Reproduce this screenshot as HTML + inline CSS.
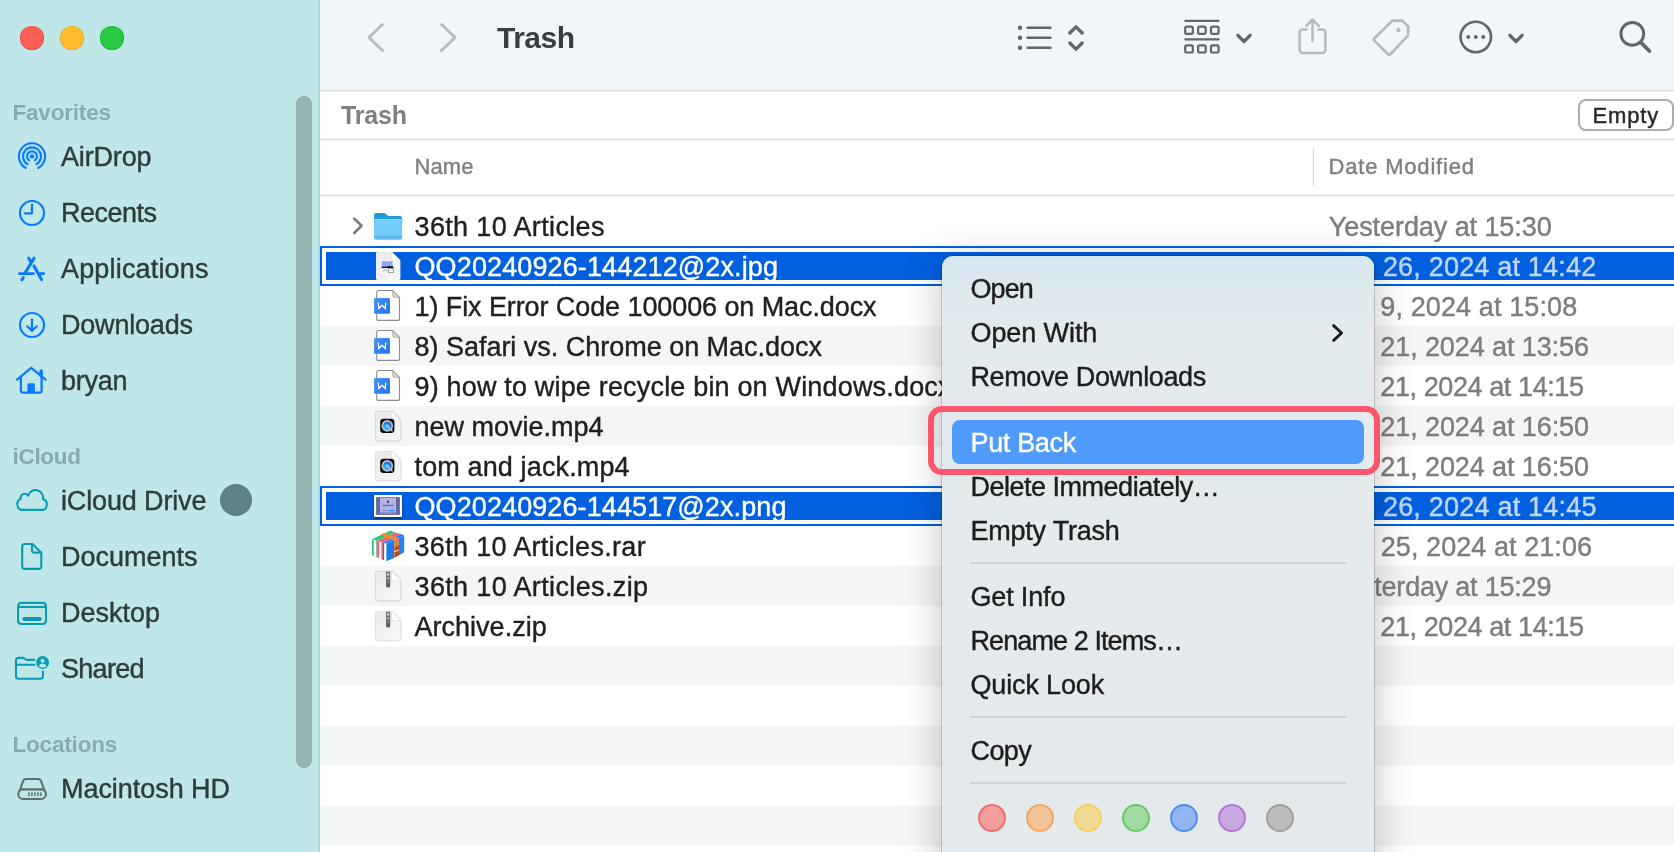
<!DOCTYPE html>
<html><head><meta charset="utf-8"><title>Trash</title>
<style>
html,body{margin:0;padding:0;}
body{width:1674px;height:852px;overflow:hidden;position:relative;background:#fff;font-family:"Liberation Sans",sans-serif;}
.t{position:absolute;white-space:nowrap;height:40px;line-height:40px;}
#root{position:absolute;left:0;top:0;width:1674px;height:852px;overflow:hidden;will-change:transform;}
.abs{position:absolute;}
svg{position:absolute;overflow:visible;}
</style></head><body><div id="root">

<div class="abs" style="left:320px;top:0;width:1354px;height:90px;background:#f1f6fa;"></div>
<div class="abs" style="left:320px;top:90px;width:1354px;height:1px;background:#d9dada;"></div>
<div class="abs" style="left:320px;top:91px;width:1354px;height:1px;background:#eeefef;"></div>
<div class="abs" style="left:320px;top:138px;width:1354px;height:3px;background:linear-gradient(#f4f4f4 0,#f4f4f4 1px,#dedede 1px,#dedede 2px,#f0f0f0 2px);"></div>
<div class="abs" style="left:320px;top:194px;width:1354px;height:3px;background:linear-gradient(#f4f4f4 0,#f4f4f4 1px,#dedede 1px,#dedede 2px,#f0f0f0 2px);"></div>
<div class="abs" style="left:320px;top:246px;width:1354px;height:40px;background:#f4f5f5;"></div>
<div class="abs" style="left:320px;top:326px;width:1354px;height:40px;background:#f4f5f5;"></div>
<div class="abs" style="left:320px;top:406px;width:1354px;height:40px;background:#f4f5f5;"></div>
<div class="abs" style="left:320px;top:486px;width:1354px;height:40px;background:#f4f5f5;"></div>
<div class="abs" style="left:320px;top:566px;width:1354px;height:40px;background:#f4f5f5;"></div>
<div class="abs" style="left:320px;top:646px;width:1354px;height:40px;background:#f4f5f5;"></div>
<div class="abs" style="left:320px;top:726px;width:1354px;height:40px;background:#f4f5f5;"></div>
<div class="abs" style="left:320px;top:806px;width:1354px;height:40px;background:#f4f5f5;"></div>
<div class="abs" style="left:0;top:0;width:320px;height:852px;background:#bfe7e8;"></div>
<div class="abs" style="left:318px;top:0;width:1px;height:852px;background:#b5dfe0;"></div>
<div class="abs" style="left:319px;top:0;width:1px;height:852px;background:#a8d2d3;"></div>
<div class="abs" style="left:296px;top:96px;width:16px;height:672px;border-radius:8px;background:#96b3b3;"></div>
<div class="abs" style="left:20px;top:26px;width:24px;height:24px;border-radius:50%;background:#fe5f57;box-shadow:inset 0 0 0 0.6px #e2473f;"></div>
<div class="abs" style="left:60px;top:26px;width:24px;height:24px;border-radius:50%;background:#febc2e;box-shadow:inset 0 0 0 0.6px #dfa023;"></div>
<div class="abs" style="left:100px;top:26px;width:24px;height:24px;border-radius:50%;background:#28c840;box-shadow:inset 0 0 0 0.6px #1fab33;"></div>
<div class="t" style="left:12.5px;top:93px;font-size:22.5px;color:#86acac;font-weight:bold;letter-spacing:-0.193px;">Favorites</div>
<div class="t" style="left:12.5px;top:437px;font-size:22.5px;color:#86acac;font-weight:bold;letter-spacing:-0.297px;">iCloud</div>
<div class="t" style="left:12.5px;top:725px;font-size:22.5px;color:#86acac;font-weight:bold;letter-spacing:-0.183px;">Locations</div>
<div class="t" style="left:61px;top:137px;font-size:27px;color:#2f3b3b;-webkit-text-stroke:0.4px #2f3b3b;letter-spacing:-0.170px;">AirDrop</div>
<div class="t" style="left:61px;top:193px;font-size:27px;color:#2f3b3b;-webkit-text-stroke:0.4px #2f3b3b;letter-spacing:-0.508px;">Recents</div>
<div class="t" style="left:61px;top:249px;font-size:27px;color:#2f3b3b;-webkit-text-stroke:0.4px #2f3b3b;letter-spacing:0.174px;">Applications</div>
<div class="t" style="left:61px;top:305px;font-size:27px;color:#2f3b3b;-webkit-text-stroke:0.4px #2f3b3b;letter-spacing:-0.197px;">Downloads</div>
<div class="t" style="left:61px;top:361px;font-size:27px;color:#2f3b3b;-webkit-text-stroke:0.4px #2f3b3b;letter-spacing:-0.260px;">bryan</div>
<div class="t" style="left:61px;top:481px;font-size:27px;color:#2f3b3b;-webkit-text-stroke:0.4px #2f3b3b;letter-spacing:-0.141px;">iCloud Drive</div>
<div class="t" style="left:61px;top:537px;font-size:27px;color:#2f3b3b;-webkit-text-stroke:0.4px #2f3b3b;letter-spacing:-0.007px;">Documents</div>
<div class="t" style="left:61px;top:593px;font-size:27px;color:#2f3b3b;-webkit-text-stroke:0.4px #2f3b3b;letter-spacing:-0.008px;">Desktop</div>
<div class="t" style="left:61px;top:649px;font-size:27px;color:#2f3b3b;-webkit-text-stroke:0.4px #2f3b3b;letter-spacing:-0.713px;">Shared</div>
<div class="t" style="left:61px;top:769px;font-size:27px;color:#2f3b3b;-webkit-text-stroke:0.4px #2f3b3b;letter-spacing:-0.050px;">Macintosh HD</div>
<div class="abs" style="left:220px;top:484px;width:32px;height:32px;border-radius:50%;background:#5b8182;"></div>
<svg style="left:8px;top:130px;" width="50" height="50" viewBox="0 0 50 50"><g fill="none" stroke="#0a7aff" stroke-width="2.1" stroke-linecap="round"><path d="M17.85 37.97 A13.1 13.1 0 1 1 30.15 37.97"/><path d="M19.50 34.19 A9 9 0 1 1 28.50 34.19"/><path d="M21.06 30.45 A5 5 0 1 1 26.94 30.45"/></g><circle cx="24" cy="26.4" r="2.2" fill="#0a7aff"/></svg>
<svg style="left:8px;top:186px;" width="50" height="50" viewBox="0 0 50 50"><g fill="none" stroke="#0a7aff" stroke-width="2.2" stroke-linecap="round" stroke-linejoin="round"><circle cx="24" cy="27" r="12"/><path d="M24 18.6 V27.3 H16.8"/></g></svg>
<svg style="left:8px;top:242px;" width="50" height="50" viewBox="0 0 50 50"><g fill="none" stroke="#0a7aff" stroke-width="2.7" stroke-linecap="round"><path d="M11.3 31.6 H25.6 M32 31.6 H35.8"/><path d="M26 16.2 L17.2 30.8 M15.3 35.6 L13.8 37.8" stroke-width="3.1"/><path d="M20.6 16.2 L23.2 20 M25.9 23.8 L33.5 37.6" stroke-width="3.1"/></g></svg>
<svg style="left:8px;top:298px;" width="50" height="50" viewBox="0 0 50 50"><g fill="none" stroke="#0a7aff" stroke-width="2.2" stroke-linecap="round" stroke-linejoin="round"><circle cx="24" cy="27" r="12"/><path d="M24 21.3 V32.8 M19.3 28.3 L24 32.9 L28.7 28.3"/></g></svg>
<svg style="left:8px;top:354px;" width="50" height="50" viewBox="0 0 50 50"><g fill="none" stroke="#0a7aff" stroke-width="2.3" stroke-linecap="round" stroke-linejoin="round"><path d="M9 25.6 L23.2 13.8 L37.6 25.6"/><path d="M12.9 23.4 V36.6 a2 2 0 0 0 2 2 H31.6 a2 2 0 0 0 2 -2 V23.4"/></g><path d="M33.1 17 V21.5" stroke="#0a7aff" stroke-width="3.6" stroke-linecap="round" fill="none"/><path d="M19.4 39 V30.6 a1.4 1.4 0 0 1 1.4 -1.4 H25.5 a1.4 1.4 0 0 1 1.4 1.4 V39 Z" fill="#0a7aff"/></svg>
<svg style="left:8px;top:476px;" width="50" height="50" viewBox="0 0 50 50"><path d="M13.2 33.9 A6.07 6.07 0 0 1 12.8 22.7 A4.1 4.1 0 0 1 20.2 19.6 A7.55 7.55 0 0 1 34.9 23 A5.8 5.8 0 0 1 35.2 33.9 Z" fill="none" stroke="#079cb4" stroke-width="2.1" stroke-linejoin="round"/></svg>
<svg style="left:8px;top:532px;" width="50" height="50" viewBox="0 0 50 50"><g fill="none" stroke="#079cb4" stroke-width="2.1" stroke-linejoin="round" stroke-linecap="round"><path d="M16.8 12 H24.6 L33.3 20.7 V34.3 a2.6 2.6 0 0 1 -2.6 2.6 H16.8 a2.6 2.6 0 0 1 -2.6 -2.6 V14.6 a2.6 2.6 0 0 1 2.6 -2.6 Z"/><path d="M24 12.2 V18.6 a2 2 0 0 0 2 2 H33"/></g></svg>
<svg style="left:8px;top:588px;" width="50" height="50" viewBox="0 0 50 50"><g fill="none" stroke="#079cb4" stroke-width="2.1"><rect x="10.1" y="14.9" width="27.9" height="21.1" rx="3.2"/><path d="M10.1 19 H38"/></g><rect x="14.4" y="28.9" width="19.4" height="4.1" rx="2" fill="#079cb4"/></svg>
<svg style="left:8px;top:644px;" width="50" height="50" viewBox="0 0 50 50"><g fill="none" stroke="#079cb4" stroke-width="2.1" stroke-linejoin="round" stroke-linecap="round"><path d="M26.4 15.9 H19 C17.4 15.9 16.6 13.9 14.6 13.9 H10.4 a2.4 2.4 0 0 0 -2.4 2.4 V32.3 a2.4 2.4 0 0 0 2.4 2.4 H32.5 a2.4 2.4 0 0 0 2.4 -2.4 V27.5"/><path d="M8 20.8 H26.4"/></g><circle cx="34.6" cy="18.5" r="6.5" fill="#079cb4"/><circle cx="34.6" cy="16.7" r="2" fill="#bfe7e8"/><path d="M30.8 22 C31.4 20.3 33 19.8 34.6 19.8 C36.2 19.8 37.8 20.3 38.4 22 C37.4 23 36.1 23.5 34.6 23.5 C33.1 23.5 31.8 23 30.8 22 Z" fill="#bfe7e8"/></svg>
<svg style="left:8px;top:764px;" width="50" height="50" viewBox="0 0 50 50"><g fill="none" stroke="#5f6f6f" stroke-width="2.1" stroke-linejoin="round"><rect x="10.3" y="25.4" width="27.6" height="9.6" rx="4.8"/><path d="M11.6 27 L15 17.3 C15.5 15.9 16.5 15 18 15 H30.2 C31.7 15 32.7 15.9 33.2 17.3 L36.6 27"/></g><rect x="20.2" y="28.4" width="1.5" height="3.6" fill="#5f6f6f"/><rect x="23.2" y="28.4" width="1.5" height="3.6" fill="#5f6f6f"/><rect x="26.2" y="28.4" width="1.5" height="3.6" fill="#5f6f6f"/><rect x="29.2" y="28.4" width="1.5" height="3.6" fill="#5f6f6f"/><rect x="32.2" y="28.4" width="1.5" height="3.6" fill="#5f6f6f"/></svg>
<svg style="left:0px;top:0px;" width="1674" height="90" viewBox="0 0 1674 90"><g fill="none" stroke="#b9bbbb" stroke-width="3" stroke-linecap="round" stroke-linejoin="round"><path d="M382.5 24.5 L369 37.5 L382.5 50.5"/><path d="M441.5 24.5 L455 37.5 L441.5 50.5"/></g></svg>
<div class="t" style="left:497px;top:18px;font-size:30px;color:#3a3d3d;font-weight:bold;letter-spacing:-0.511px;">Trash</div>
<svg style="left:0px;top:0px;" width="1674" height="90" viewBox="0 0 1674 90"><g fill="none" stroke="#5f6767" stroke-width="2.6" stroke-linecap="round"><path d="M1027.6 27.8 H1050.4"/><path d="M1027.6 37.8 H1050.4"/><path d="M1027.6 47.8 H1050.4"/></g><circle cx="1020" cy="27.8" r="2.2" fill="#5f6767"/><circle cx="1020" cy="37.8" r="2.2" fill="#5f6767"/><circle cx="1020" cy="47.8" r="2.2" fill="#5f6767"/><g fill="none" stroke="#5f6767" stroke-width="3.3" stroke-linecap="round" stroke-linejoin="round"><path d="M1069.8 33 L1076 26.8 L1082.2 33"/><path d="M1069.8 43 L1076 49.2 L1082.2 43"/></g><g fill="none" stroke="#5f6767" stroke-width="2.2" stroke-linecap="round" stroke-linejoin="round"><path d="M1185.3 20.8 H1218.6 M1185.3 39.4 H1218.6"/><rect x="1185.2" y="26.6" width="7.6" height="7.2" rx="1.6"/><rect x="1198.1" y="26.6" width="7.6" height="7.2" rx="1.6"/><rect x="1211" y="26.6" width="7.6" height="7.2" rx="1.6"/><rect x="1185.2" y="45.3" width="7.6" height="7.2" rx="1.6"/><rect x="1198.1" y="45.3" width="7.6" height="7.2" rx="1.6"/><rect x="1211" y="45.3" width="7.6" height="7.2" rx="1.6"/></g><g fill="none" stroke="#5f6767" stroke-width="3.3" stroke-linecap="round" stroke-linejoin="round"><path d="M1237.8 35.3 L1244 41.5 L1250.2 35.3"/><path d="M1509.8 35.3 L1516 41.5 L1522.2 35.3"/></g><g fill="none" stroke="#b7baba" stroke-width="2.5" stroke-linecap="round" stroke-linejoin="round"><path d="M1306.5 29.5 H1302.6 a3 3 0 0 0 -3 3 V50 a3 3 0 0 0 3 3 H1322.4 a3 3 0 0 0 3 -3 V32.5 a3 3 0 0 0 -3 -3 H1318.5"/><path d="M1312.5 41 V19.8 M1306.2 25.8 L1312.5 19.5 L1318.8 25.8"/></g><g fill="none" stroke="#b7baba" stroke-width="2.6" stroke-linejoin="round"><path d="M1392.5 20.6 H1402.3 L1408.2 26.5 V35.3 L1390.6 54 a2 2 0 0 1 -2.8 0 L1374.6 40.8 a2 2 0 0 1 0 -2.8 Z"/></g><circle cx="1398.4" cy="30.2" r="2.1" fill="#b7baba"/><circle cx="1475.8" cy="37" r="15.2" fill="none" stroke="#5f6767" stroke-width="2.6"/><circle cx="1468.3" cy="37" r="1.9" fill="#5f6767"/><circle cx="1475.8" cy="37" r="1.9" fill="#5f6767"/><circle cx="1483.3" cy="37" r="1.9" fill="#5f6767"/><g fill="none" stroke="#5f6767" stroke-width="3" stroke-linecap="round"><circle cx="1632.3" cy="33.8" r="11.4"/></g><path d="M1641 42.6 L1649.4 51" fill="none" stroke="#5f6767" stroke-width="3.8" stroke-linecap="round"/></svg>
<div class="t" style="left:341px;top:95px;font-size:25px;color:#7f7f7f;font-weight:bold;letter-spacing:-0.175px;">Trash</div>
<div class="abs" style="left:1577.5px;top:99px;width:96.5px;height:31.5px;box-sizing:border-box;border:2px solid #aaadad;border-radius:8px;background:#fff;"></div>
<div class="t" style="left:1592.4px;top:96px;font-size:22px;color:#262626;-webkit-text-stroke:0.4px #262626;letter-spacing:0.888px;">Empty</div>
<div class="t" style="left:414.5px;top:147px;font-size:22px;color:#7f7f7f;-webkit-text-stroke:0.4px #7f7f7f;letter-spacing:0.104px;">Name</div>
<div class="t" style="left:1328.5px;top:147px;font-size:22px;color:#7f7f7f;-webkit-text-stroke:0.4px #7f7f7f;letter-spacing:0.812px;">Date Modified</div>
<div class="abs" style="left:1312.5px;top:148px;width:1px;height:38px;background:#d6d6d6;"></div>
<div class="abs" style="left:320px;top:246px;width:1360px;height:40px;box-sizing:border-box;border:2px solid #0060df;background:#fff;"></div>
<div class="abs" style="left:326px;top:252px;width:1354px;height:28px;background:#0060df;"></div>
<div class="abs" style="left:320px;top:486px;width:1360px;height:40px;box-sizing:border-box;border:2px solid #0060df;background:#fff;"></div>
<div class="abs" style="left:326px;top:492px;width:1354px;height:28px;background:#0060df;"></div>
<svg style="left:340px;top:206px;" width="40" height="40" viewBox="0 0 40 40"><path d="M14.2 12.6 L21.6 19.8 L14.2 27" fill="none" stroke="#7c7c7c" stroke-width="2.6" stroke-linecap="round" stroke-linejoin="round"/></svg>
<svg style="left:373.8px;top:213px;" width="28.2" height="26.6" viewBox="0 0 28.2 26.6"><path d="M0 2.4 a2.4 2.4 0 0 1 2.4 -2.4 H9.6 C11 0 11.6 0.6 12.4 1.6 C13.2 2.6 13.8 3 15.2 3 H25.8 a2.4 2.4 0 0 1 2.4 2.4 V10 H0 Z" fill="#2199dc"/><rect x="0" y="6" width="28.2" height="20.4" rx="2" fill="#72ccfa"/><rect x="0" y="6" width="28.2" height="1" fill="#8fd8fc"/><path d="M0 22.6 H28.2 V24.4 a2 2 0 0 1 -2 2 H2 a2 2 0 0 1 -2 -2 Z" fill="#5db9ee"/></svg>
<svg style="left:376px;top:252px;" width="24" height="28" viewBox="0 0 24 28"><defs><linearGradient id="pg" x1="0" y1="0" x2="1" y2="1"><stop offset="0" stop-color="#e9e9e9"/><stop offset="1" stop-color="#f8f8f8"/></linearGradient></defs><path d="M1.4 0 H16 L24.4 8.4 V26.6 a1.4 1.4 0 0 1 -1.4 1.4 H1.4 a1.4 1.4 0 0 1 -1.4 -1.4 V1.4 a1.4 1.4 0 0 1 1.4 -1.4 Z" fill="url(#pg)"/><path d="M15.4 0.2 L24.3 9.1 H17 a1.6 1.6 0 0 1 -1.6 -1.6 Z" fill="#d9d9d9"/><path d="M16 0 L24.4 8.4 H17.4 a1.4 1.4 0 0 1 -1.4 -1.4 Z" fill="#ffffff"/><rect x="4.4" y="8.4" width="13.6" height="13.4" rx="1.6" fill="#fafafa"/><rect x="5.6" y="9.2" width="11" height="5.6" fill="#8ea9f2"/><rect x="5.6" y="14.6" width="11" height="1.6" fill="#0b1040"/><path d="M11.4 14.2 h5.4 l1.2 2 h-7.4 z" fill="#111"/><rect x="5.6" y="16.2" width="11" height="4.4" fill="#eef2f4"/><path d="M12.8 16.6 h4 l1 3.8 h-5.6 z" fill="#fff" stroke="#555" stroke-width="0.6"/><path d="M7 19.4 l2.4 -1.6 l2 1" stroke="#888" stroke-width="0.7" fill="none"/></svg>
<svg style="left:375px;top:290.2px;" width="26" height="32" viewBox="0 0 26 32"><defs><linearGradient id="wb" x1="0" y1="0" x2="1" y2="1"><stop offset="0" stop-color="#4d90f4"/><stop offset="1" stop-color="#1f74ef"/></linearGradient></defs><path d="M3.7 0.5 H17.6 L24.5 7.4 V28.4 a2 2 0 0 1 -2 2 H3.7 a2 2 0 0 1 -2 -2 V2.5 a2 2 0 0 1 2 -2 Z" fill="#fff" stroke="#8d8d8d" stroke-width="1.1"/><path d="M17.6 0.7 V5.6 a1.8 1.8 0 0 0 1.8 1.8 H24.3 Z" fill="#d6d6d6" stroke="#9a9a9a" stroke-width="0.6" stroke-linejoin="round"/><rect x="-0.9" y="7.9" width="15.9" height="15.9" rx="1.3" fill="url(#wb)"/><path d="M3.3 12.5 L3.85 18.5 L7.05 15.1 L10.25 18.5 L10.8 12.5" fill="none" stroke="#fff" stroke-width="1.25" stroke-linejoin="miter" stroke-linecap="butt"/></svg>
<svg style="left:375px;top:330.2px;" width="26" height="32" viewBox="0 0 26 32"><defs><linearGradient id="wb" x1="0" y1="0" x2="1" y2="1"><stop offset="0" stop-color="#4d90f4"/><stop offset="1" stop-color="#1f74ef"/></linearGradient></defs><path d="M3.7 0.5 H17.6 L24.5 7.4 V28.4 a2 2 0 0 1 -2 2 H3.7 a2 2 0 0 1 -2 -2 V2.5 a2 2 0 0 1 2 -2 Z" fill="#fff" stroke="#8d8d8d" stroke-width="1.1"/><path d="M17.6 0.7 V5.6 a1.8 1.8 0 0 0 1.8 1.8 H24.3 Z" fill="#d6d6d6" stroke="#9a9a9a" stroke-width="0.6" stroke-linejoin="round"/><rect x="-0.9" y="7.9" width="15.9" height="15.9" rx="1.3" fill="url(#wb)"/><path d="M3.3 12.5 L3.85 18.5 L7.05 15.1 L10.25 18.5 L10.8 12.5" fill="none" stroke="#fff" stroke-width="1.25" stroke-linejoin="miter" stroke-linecap="butt"/></svg>
<svg style="left:375px;top:370.2px;" width="26" height="32" viewBox="0 0 26 32"><defs><linearGradient id="wb" x1="0" y1="0" x2="1" y2="1"><stop offset="0" stop-color="#4d90f4"/><stop offset="1" stop-color="#1f74ef"/></linearGradient></defs><path d="M3.7 0.5 H17.6 L24.5 7.4 V28.4 a2 2 0 0 1 -2 2 H3.7 a2 2 0 0 1 -2 -2 V2.5 a2 2 0 0 1 2 -2 Z" fill="#fff" stroke="#8d8d8d" stroke-width="1.1"/><path d="M17.6 0.7 V5.6 a1.8 1.8 0 0 0 1.8 1.8 H24.3 Z" fill="#d6d6d6" stroke="#9a9a9a" stroke-width="0.6" stroke-linejoin="round"/><rect x="-0.9" y="7.9" width="15.9" height="15.9" rx="1.3" fill="url(#wb)"/><path d="M3.3 12.5 L3.85 18.5 L7.05 15.1 L10.25 18.5 L10.8 12.5" fill="none" stroke="#fff" stroke-width="1.25" stroke-linejoin="miter" stroke-linecap="butt"/></svg>
<svg style="left:376px;top:412.2px;filter:drop-shadow(0 0.8px 0.9px rgba(0,0,0,0.33));" width="24.4" height="28.4" viewBox="0 0 24.4 28.4"><defs><linearGradient id="pg" x1="0" y1="0" x2="1" y2="1"><stop offset="0" stop-color="#e9e9e9"/><stop offset="1" stop-color="#f8f8f8"/></linearGradient></defs><path d="M1.4 0 H16 L24.4 8.4 V27.0 a1.4 1.4 0 0 1 -1.4 1.4 H1.4 a1.4 1.4 0 0 1 -1.4 -1.4 V1.4 a1.4 1.4 0 0 1 1.4 -1.4 Z" fill="url(#pg)"/><path d="M15.4 0.2 L24.3 9.1 H17 a1.6 1.6 0 0 1 -1.6 -1.6 Z" fill="#d9d9d9"/><path d="M16 0 L24.4 8.4 H17.4 a1.4 1.4 0 0 1 -1.4 -1.4 Z" fill="#ffffff"/><defs><radialGradient id="qt" cx="0.3" cy="0.75" r="0.9"><stop offset="0" stop-color="#25ccff"/><stop offset="0.55" stop-color="#1b86fb"/><stop offset="1" stop-color="#1a4fe8"/></radialGradient></defs><rect x="4.2" y="6.8" width="14.2" height="14.2" rx="3.2" fill="#0b0b0b"/><circle cx="11.3" cy="13.9" r="5.8" fill="#bfc5cc"/><circle cx="11.3" cy="13.9" r="4.2" fill="url(#qt)"/><circle cx="11.2" cy="13.6" r="1.2" fill="#d7dbe0"/><path d="M11.4 13.8 L16 18.6" stroke="#b8bdc3" stroke-width="1.8" stroke-linecap="round"/></svg>
<svg style="left:376px;top:452.2px;filter:drop-shadow(0 0.8px 0.9px rgba(0,0,0,0.33));" width="24.4" height="28.4" viewBox="0 0 24.4 28.4"><defs><linearGradient id="pg" x1="0" y1="0" x2="1" y2="1"><stop offset="0" stop-color="#e9e9e9"/><stop offset="1" stop-color="#f8f8f8"/></linearGradient></defs><path d="M1.4 0 H16 L24.4 8.4 V27.0 a1.4 1.4 0 0 1 -1.4 1.4 H1.4 a1.4 1.4 0 0 1 -1.4 -1.4 V1.4 a1.4 1.4 0 0 1 1.4 -1.4 Z" fill="url(#pg)"/><path d="M15.4 0.2 L24.3 9.1 H17 a1.6 1.6 0 0 1 -1.6 -1.6 Z" fill="#d9d9d9"/><path d="M16 0 L24.4 8.4 H17.4 a1.4 1.4 0 0 1 -1.4 -1.4 Z" fill="#ffffff"/><defs><radialGradient id="qt" cx="0.3" cy="0.75" r="0.9"><stop offset="0" stop-color="#25ccff"/><stop offset="0.55" stop-color="#1b86fb"/><stop offset="1" stop-color="#1a4fe8"/></radialGradient></defs><rect x="4.2" y="6.8" width="14.2" height="14.2" rx="3.2" fill="#0b0b0b"/><circle cx="11.3" cy="13.9" r="5.8" fill="#bfc5cc"/><circle cx="11.3" cy="13.9" r="4.2" fill="url(#qt)"/><circle cx="11.2" cy="13.6" r="1.2" fill="#d7dbe0"/><path d="M11.4 13.8 L16 18.6" stroke="#b8bdc3" stroke-width="1.8" stroke-linecap="round"/></svg>
<div class="abs" style="left:374px;top:495px;width:28px;height:22px;box-shadow:0 1.5px 2px rgba(0,0,40,0.45);"></div>
<svg style="left:374px;top:495px;" width="28" height="22" viewBox="0 0 28 22"><rect x="0" y="0" width="28" height="22" fill="#fff"/><rect x="2.1" y="2.1" width="23.8" height="17.8" fill="#66669f"/><rect x="6" y="2.8" width="16" height="15.6" fill="#b5b4e9"/><rect x="6" y="17.2" width="16" height="1.6" fill="#8a89c4"/><rect x="13" y="5.6" width="2" height="2.2" rx="0.4" fill="#3b3f3b"/><rect x="8.4" y="9.8" width="11.4" height="1.3" fill="#6f6aa8"/><rect x="8.4" y="12.6" width="11.4" height="0.6" fill="#a19fd8"/><rect x="7.4" y="15" width="6" height="1.1" fill="#8f8dc6"/><rect x="14.2" y="14.9" width="6.8" height="1.5" rx="0.7" fill="#2a96ff"/></svg>
<svg style="left:365px;top:523px;" width="50" height="50" viewBox="0 0 852 852"><g><polygon points="120,275 430,128 512,160 215,308" fill="#25cc7a"/><polygon points="215,308 512,160 612,188 305,338" fill="#f4626c"/><polygon points="305,338 612,188 668,215 365,352" fill="#2a7ff0"/><polygon points="255,205 325,172 580,255 500,295" fill="#ef8a3c"/><polygon points="120,275 150,285 150,562 120,548" fill="#1cc370"/><polygon points="150,285 196,300 196,580 150,562" fill="#fdfdfd"/><polygon points="196,300 215,308 215,590 196,580" fill="#56605b"/><polygon points="215,308 245,318 245,602 215,590" fill="#f0626c"/><polygon points="245,318 280,330 280,616 245,602" fill="#fdfdfd"/><polygon points="280,330 305,338 305,626 280,616" fill="#ee5a64"/><polygon points="305,338 330,345 330,636 305,626" fill="#1f6fe6"/><polygon points="330,345 365,352 365,650 330,636" fill="#fdfdfd"/><polygon points="365,352 500,292 500,592 365,650" fill="#1c78ee"/><polygon points="500,292 578,256 578,548 500,592" fill="#e27d33"/><polygon points="505,420 578,380 578,548 505,590" fill="#c2440e"/><polygon points="500,478 578,452 578,470 500,500" fill="#f6e6d8"/><polygon points="578,256 668,215 668,500 578,548" fill="#2384f6"/></g></svg>
<svg style="left:376px;top:572.1px;filter:drop-shadow(0 0.8px 0.9px rgba(0,0,0,0.33));" width="24.4" height="28.2" viewBox="0 0 24.4 28.2"><defs><linearGradient id="pg" x1="0" y1="0" x2="1" y2="1"><stop offset="0" stop-color="#e9e9e9"/><stop offset="1" stop-color="#f8f8f8"/></linearGradient></defs><path d="M1.4 0 H16 L24.4 8.4 V26.8 a1.4 1.4 0 0 1 -1.4 1.4 H1.4 a1.4 1.4 0 0 1 -1.4 -1.4 V1.4 a1.4 1.4 0 0 1 1.4 -1.4 Z" fill="url(#pg)"/><path d="M15.4 0.2 L24.3 9.1 H17 a1.6 1.6 0 0 1 -1.6 -1.6 Z" fill="#d9d9d9"/><path d="M16 0 L24.4 8.4 H17.4 a1.4 1.4 0 0 1 -1.4 -1.4 Z" fill="#ffffff"/><path d="M10.1 -0.3 H14.2 V14 a1.6 1.6 0 0 1 -1.6 1.6 H11.7 a1.6 1.6 0 0 1 -1.6 -1.6 Z" fill="#5b6061"/><rect x="10.9" y="1" width="2.5" height="2.8" fill="#c3cacb"/><rect x="10.9" y="4.8" width="2.5" height="2.8" fill="#a9b1b2"/><rect x="11" y="9" width="2.3" height="1.8" fill="#7c8485"/></svg>
<svg style="left:376px;top:612.1px;filter:drop-shadow(0 0.8px 0.9px rgba(0,0,0,0.33));" width="24.4" height="28.2" viewBox="0 0 24.4 28.2"><defs><linearGradient id="pg" x1="0" y1="0" x2="1" y2="1"><stop offset="0" stop-color="#e9e9e9"/><stop offset="1" stop-color="#f8f8f8"/></linearGradient></defs><path d="M1.4 0 H16 L24.4 8.4 V26.8 a1.4 1.4 0 0 1 -1.4 1.4 H1.4 a1.4 1.4 0 0 1 -1.4 -1.4 V1.4 a1.4 1.4 0 0 1 1.4 -1.4 Z" fill="url(#pg)"/><path d="M15.4 0.2 L24.3 9.1 H17 a1.6 1.6 0 0 1 -1.6 -1.6 Z" fill="#d9d9d9"/><path d="M16 0 L24.4 8.4 H17.4 a1.4 1.4 0 0 1 -1.4 -1.4 Z" fill="#ffffff"/><path d="M10.1 -0.3 H14.2 V14 a1.6 1.6 0 0 1 -1.6 1.6 H11.7 a1.6 1.6 0 0 1 -1.6 -1.6 Z" fill="#5b6061"/><rect x="10.9" y="1" width="2.5" height="2.8" fill="#c3cacb"/><rect x="10.9" y="4.8" width="2.5" height="2.8" fill="#a9b1b2"/><rect x="11" y="9" width="2.3" height="1.8" fill="#7c8485"/></svg>
<div class="t" style="left:414.5px;top:207px;font-size:27px;color:#1f1f1f;-webkit-text-stroke:0.4px #1f1f1f;letter-spacing:0.359px;">36th 10 Articles</div>
<div class="t" style="left:1328.80px;top:207px;font-size:27px;color:#7d7d7d;-webkit-text-stroke:0.4px #7d7d7d;letter-spacing:-0.075px;">Yesterday at 15:30</div>
<div class="t" style="left:414.5px;top:247px;font-size:27px;color:#fff;-webkit-text-stroke:0.4px #fff;letter-spacing:0.123px;">QQ20240926-144212@2x.jpg</div>
<div class="t" style="left:1326.58px;top:247px;font-size:27px;color:#c3d7f6;-webkit-text-stroke:0.4px #c3d7f6;letter-spacing:0.195px;">Sep 26, 2024 at 14:42</div>
<div class="t" style="left:414.5px;top:287px;font-size:27px;color:#1f1f1f;-webkit-text-stroke:0.4px #1f1f1f;letter-spacing:-0.089px;">1) Fix Error Code 100006 on Mac.docx</div>
<div class="t" style="left:1330.33px;top:287px;font-size:27px;color:#7d7d7d;-webkit-text-stroke:0.4px #7d7d7d;letter-spacing:0.115px;">Oct 9, 2024 at 15:08</div>
<div class="t" style="left:414.5px;top:327px;font-size:27px;color:#1f1f1f;-webkit-text-stroke:0.4px #1f1f1f;letter-spacing:-0.021px;">8) Safari vs. Chrome on Mac.docx</div>
<div class="t" style="left:1331.19px;top:327px;font-size:27px;color:#7d7d7d;-webkit-text-stroke:0.4px #7d7d7d;letter-spacing:-0.099px;">Oct 21, 2024 at 13:56</div>
<div class="t" style="left:414.5px;top:367px;font-size:27px;color:#1f1f1f;-webkit-text-stroke:0.4px #1f1f1f;letter-spacing:0.177px;">9) how to wipe recycle bin on Windows.docx</div>
<div class="t" style="left:1332.42px;top:367px;font-size:27px;color:#7d7d7d;-webkit-text-stroke:0.4px #7d7d7d;letter-spacing:-0.405px;">Oct 21, 2024 at 14:15</div>
<div class="t" style="left:414.5px;top:407px;font-size:27px;color:#1f1f1f;-webkit-text-stroke:0.4px #1f1f1f;letter-spacing:0.002px;">new movie.mp4</div>
<div class="t" style="left:1331.17px;top:407px;font-size:27px;color:#7d7d7d;-webkit-text-stroke:0.4px #7d7d7d;letter-spacing:-0.093px;">Oct 21, 2024 at 16:50</div>
<div class="t" style="left:414.5px;top:447px;font-size:27px;color:#1f1f1f;-webkit-text-stroke:0.4px #1f1f1f;letter-spacing:0.133px;">tom and jack.mp4</div>
<div class="t" style="left:1331.17px;top:447px;font-size:27px;color:#7d7d7d;-webkit-text-stroke:0.4px #7d7d7d;letter-spacing:-0.093px;">Oct 21, 2024 at 16:50</div>
<div class="t" style="left:414.5px;top:487px;font-size:27px;color:#fff;-webkit-text-stroke:0.4px #fff;letter-spacing:0.096px;">QQ20240926-144517@2x.png</div>
<div class="t" style="left:1326.50px;top:487px;font-size:27px;color:#c3d7f6;-webkit-text-stroke:0.4px #c3d7f6;letter-spacing:0.214px;">Sep 26, 2024 at 14:45</div>
<div class="t" style="left:414.5px;top:527px;font-size:27px;color:#1f1f1f;-webkit-text-stroke:0.4px #1f1f1f;letter-spacing:0.320px;">36th 10 Articles.rar</div>
<div class="t" style="left:1331.04px;top:527px;font-size:27px;color:#7d7d7d;-webkit-text-stroke:0.4px #7d7d7d;letter-spacing:0.064px;">Oct 25, 2024 at 21:06</div>
<div class="t" style="left:414.5px;top:567px;font-size:27px;color:#1f1f1f;-webkit-text-stroke:0.4px #1f1f1f;letter-spacing:0.362px;">36th 10 Articles.zip</div>
<div class="t" style="left:1330.90px;top:567px;font-size:27px;color:#7d7d7d;-webkit-text-stroke:0.4px #7d7d7d;letter-spacing:-0.216px;">Yesterday at 15:29</div>
<div class="t" style="left:414.5px;top:607px;font-size:27px;color:#1f1f1f;-webkit-text-stroke:0.4px #1f1f1f;letter-spacing:0.015px;">Archive.zip</div>
<div class="t" style="left:1332.42px;top:607px;font-size:27px;color:#7d7d7d;-webkit-text-stroke:0.4px #7d7d7d;letter-spacing:-0.405px;">Oct 21, 2024 at 14:15</div>
<div class="abs" style="left:942px;top:256px;width:432px;height:640px;border-radius:11px;background:linear-gradient(#d7e6ee 0px,#dfe9ee 40px,#e4ebee 90px,#e4eaec 100%);box-shadow:0 0 0 1px rgba(0,0,0,0.17),0 6px 38px rgba(0,0,0,0.25);"></div>
<div class="abs" style="left:952px;top:420px;width:412px;height:44px;border-radius:8px;background:#4f9afa;"></div>
<div class="t" style="left:970.5px;top:269px;font-size:27px;color:#1d1d1d;-webkit-text-stroke:0.4px #1d1d1d;letter-spacing:-0.916px;">Open</div>
<div class="t" style="left:970.5px;top:313px;font-size:27px;color:#1d1d1d;-webkit-text-stroke:0.4px #1d1d1d;letter-spacing:-0.094px;">Open With</div>
<div class="t" style="left:970.5px;top:357px;font-size:27px;color:#1d1d1d;-webkit-text-stroke:0.4px #1d1d1d;letter-spacing:-0.394px;">Remove Downloads</div>
<div class="t" style="left:970.5px;top:423px;font-size:27px;color:#fff;-webkit-text-stroke:0.4px #fff;letter-spacing:-0.336px;">Put Back</div>
<div class="t" style="left:970.5px;top:467px;font-size:27px;color:#1d1d1d;-webkit-text-stroke:0.4px #1d1d1d;letter-spacing:-0.494px;">Delete Immediately…</div>
<div class="t" style="left:970.5px;top:511px;font-size:27px;color:#1d1d1d;-webkit-text-stroke:0.4px #1d1d1d;letter-spacing:-0.225px;">Empty Trash</div>
<div class="t" style="left:970.5px;top:577px;font-size:27px;color:#1d1d1d;-webkit-text-stroke:0.4px #1d1d1d;letter-spacing:-0.165px;">Get Info</div>
<div class="t" style="left:970.5px;top:621px;font-size:27px;color:#1d1d1d;-webkit-text-stroke:0.4px #1d1d1d;letter-spacing:-0.906px;">Rename 2 Items…</div>
<div class="t" style="left:970.5px;top:665px;font-size:27px;color:#1d1d1d;-webkit-text-stroke:0.4px #1d1d1d;letter-spacing:-0.152px;">Quick Look</div>
<div class="t" style="left:970.5px;top:731px;font-size:27px;color:#1d1d1d;-webkit-text-stroke:0.4px #1d1d1d;letter-spacing:-0.610px;">Copy</div>
<div class="abs" style="left:970px;top:562px;width:376px;height:2px;background:#cdd3d5;"></div>
<div class="abs" style="left:970px;top:716px;width:376px;height:2px;background:#cdd3d5;"></div>
<div class="abs" style="left:970px;top:782px;width:376px;height:2px;background:#cdd3d5;"></div>
<svg style="left:1320px;top:313px;" width="40" height="40" viewBox="0 0 40 40"><path d="M13.6 12.6 L21.6 20 L13.6 27.4" fill="none" stroke="#1a1a1a" stroke-width="2.8" stroke-linecap="round" stroke-linejoin="round"/></svg>
<div class="abs" style="left:978px;top:803.6px;width:28px;height:28px;box-sizing:border-box;border-radius:50%;background:#f29e9d;border:2px solid #f06f6d;"></div>
<div class="abs" style="left:1026px;top:803.6px;width:28px;height:28px;box-sizing:border-box;border-radius:50%;background:#f2c298;border:2px solid #f2a862;"></div>
<div class="abs" style="left:1074px;top:803.6px;width:28px;height:28px;box-sizing:border-box;border-radius:50%;background:#f2da96;border:2px solid #f3cf62;"></div>
<div class="abs" style="left:1122px;top:803.6px;width:28px;height:28px;box-sizing:border-box;border-radius:50%;background:#a0daa1;border:2px solid #66c96a;"></div>
<div class="abs" style="left:1170px;top:803.6px;width:28px;height:28px;box-sizing:border-box;border-radius:50%;background:#90b5f3;border:2px solid #518ff0;"></div>
<div class="abs" style="left:1218px;top:803.6px;width:28px;height:28px;box-sizing:border-box;border-radius:50%;background:#c9a7df;border:2px solid #b676d8;"></div>
<div class="abs" style="left:1266px;top:803.6px;width:28px;height:28px;box-sizing:border-box;border-radius:50%;background:#bbbcbd;border:2px solid #a0a1a1;"></div>
<div class="abs" style="left:928px;top:406px;width:452px;height:69px;box-sizing:border-box;border:6px solid #fb566b;border-radius:14px;"></div>
</div></body></html>
